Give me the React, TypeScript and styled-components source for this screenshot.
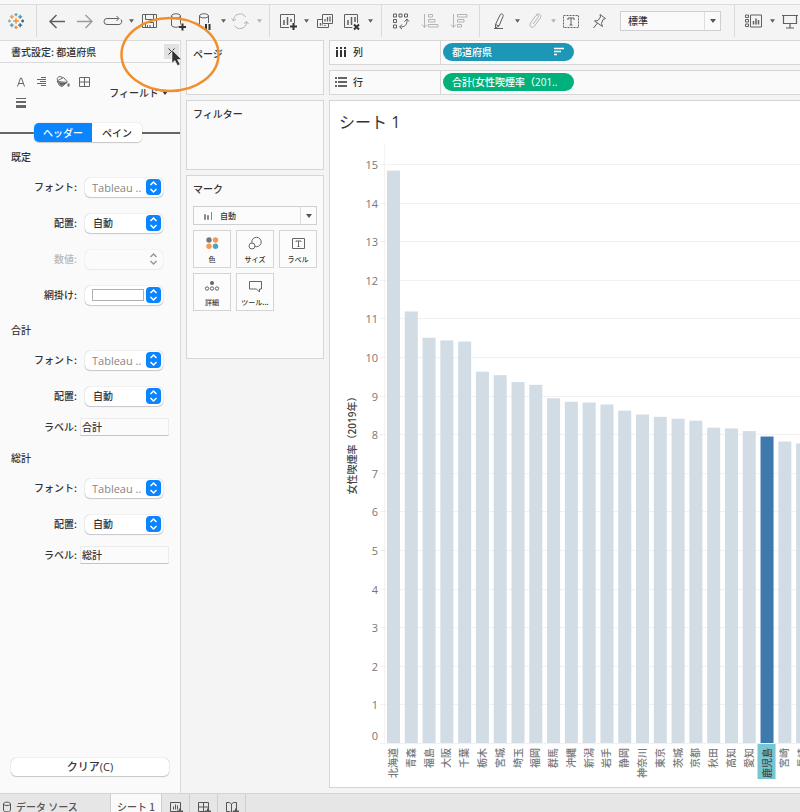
import React from "react";
import styled, { createGlobalStyle, css } from "styled-components";

const GlobalStyle = createGlobalStyle`
  *, *::before, *::after { box-sizing: border-box; }
  body {
    margin: 0;
    background: #f4f4f4;
    color: #333;
    font: 500 10px/16px "Liberation Sans", "Noto Sans CJK JP", sans-serif;
  }
  button, input, select { font: inherit; color: inherit; margin: 0; }
  h1, h2 { margin: 0; font-weight: 500; }
`;

const cjk = `"Noto Sans CJK JP", sans-serif`;
const latin = `"Open Sans", "Noto Sans CJK JP", sans-serif`;

/* ---------- frame ---------- */

const Window = styled.div`
  position: relative;
  display: flex;
  flex-direction: column;
  min-height: 100vh;
  overflow: hidden;
  font-family: ${cjk};
`;

const Toolbar = styled.header`
  display: flex;
  height: 40px;
  padding: 5px 0 3px;
  overflow: hidden;
  background: linear-gradient(#f8f8f8 4px, #dcdcdc 4px, #dcdcdc 5px, #f4f4f4 5px);
`;

const Group = styled.div<{ $left: number; $right: number; $last?: boolean; $gap?: number }>`
  display: flex;
  flex: none;
  align-items: center;
  gap: ${(p) => p.$gap ?? 0}px;
  padding: 0 ${(p) => p.$right}px 0 ${(p) => p.$left}px;
  border-right: ${(p) => (p.$last ? 0 : 1)}px solid #dadada;
`;

const ToolButton = styled.button<{ $dim?: boolean }>`
  display: grid;
  place-items: center;
  flex: none;
  width: 28px;
  height: 28px;
  padding: 0;
  border: 0;
  background: none;
  color: ${(p) => (p.$dim ? "#b4b4b4" : "#606060")};
`;

const CaretButton = styled(ToolButton)`
  width: 8px;
`;

const FitSelect = styled.label`
  display: grid;
  grid-template-columns: 1fr 16px;
  width: 101px;
  height: 20px;
  margin-left: 7px;
  border: 1px solid #cfcfcf;
  background: #fafafa;
`;

const PlainSelect = styled.select`
  min-width: 0;
  padding: 0 7px;
  border: 0;
  background: none;
  appearance: none;
`;

const SelectArrow = styled.span`
  display: grid;
  place-items: center;
  border-left: 1px solid #dedede;
  color: #555;
`;

const Workspace = styled.main`
  display: grid;
  flex: 1;
  grid-template-columns: 181px 138px minmax(0, 1fr);
  column-gap: 5px;
`;

/* ---------- format panel ---------- */

const FormatPanel = styled.aside`
  display: flex;
  flex-direction: column;
  padding-bottom: 17px;
  border: solid #dadada;
  border-width: 1px 1px 0 0;
  background: #fafafa;
`;

const PanelTitle = styled.div`
  display: flex;
  align-items: center;
  justify-content: space-between;
  height: 22px;
  padding: 0 1px 0 11px;
  border-bottom: 1px solid #dadada;
`;

const CloseButton = styled.button`
  display: grid;
  place-items: center;
  width: 15px;
  height: 15px;
  padding: 0;
  border: 0;
  background: #e2e2e2;
`;

const FormatTools = styled.div`
  display: flex;
  align-items: center;
  justify-content: space-between;
  padding: 11px 12px 12px 13px;
`;

const FormatIcons = styled.div`
  display: grid;
  grid-template-columns: repeat(4, 15px);
  gap: 5px 6px;
`;

const FormatButton = styled.button`
  display: grid;
  place-items: center;
  height: 16px;
  padding: 0;
  border: 0;
  background: none;
  color: #666;
`;

const FieldMenu = styled.button`
  display: flex;
  align-items: center;
  gap: 3px;
  padding: 0;
  border: 0;
  background: none;
`;

const TabLine = styled.div`
  display: grid;
  grid-template-columns: 34px auto 1fr;
  align-items: center;
  &::before, &::after {
    content: "";
    height: 2px;
    background: #666;
  }
`;

const Tabs = styled.div`
  display: flex;
  height: 19px;
  border-radius: 5px;
  overflow: hidden;
  background: #fff;
  box-shadow: 0 0 1px #999, 0 1px 1px #ccc;
`;

const Tab = styled.button<{ $active?: boolean }>`
  width: ${(p) => (p.$active ? 58 : 50)}px;
  padding: 0;
  border: 0;
  background: ${(p) => (p.$active ? "#0a84ff" : "#fff")};
  color: ${(p) => (p.$active ? "#fff" : "#333")};
`;

const Section = styled.section<{ $space: number }>`
  display: flex;
  flex-direction: column;
  gap: 16px;
  padding-top: ${(p) => p.$space}px;
`;

const SectionTitle = styled.h2`
  height: 20px;
  margin-bottom: -6px;
  padding-left: 11px;
  font-size: 10px;
  line-height: 20px;
`;

const Field = styled.label<{ $disabled?: boolean; $text?: boolean }>`
  display: grid;
  grid-template-columns: 77px 1fr;
  column-gap: ${(p) => (p.$text ? 3 : 8)}px;
  align-items: center;
  height: 20px;
  padding-right: ${(p) => (p.$text ? 11 : 17)}px;
  ${(p) => p.$text && css`margin-top: -5px;`}
  color: ${(p) => (p.$disabled ? "#b8b8b8" : "#333")};
`;

const FieldName = styled.span`
  text-align: right;
`;

const Popup = styled.span<{ $disabled?: boolean }>`
  display: grid;
  grid-template-columns: 1fr 15px;
  align-items: center;
  height: 19px;
  padding-right: 2px;
  border-radius: 5px;
  background: ${(p) => (p.$disabled ? "#fbfbfb" : "#fff")};
  box-shadow: 0 0 1px ${(p) => (p.$disabled ? "#ccc" : "#999")}, 0 1px 1px ${(p) => (p.$disabled ? "#eee" : "#ccc")};
`;

const PopupSelect = styled.select<{ $font?: boolean }>`
  min-width: 0;
  height: 19px;
  padding: 0 0 0 8px;
  border: 0;
  background: none;
  appearance: none;
  ${(p) => p.$font && css`
    padding: 2px 0 0 7px;
    font: 400 11px/16px "Open Sans", sans-serif;
    color: #858585;
  `}
`;

const Swatch = styled.button`
  height: 12px;
  margin: 0 2px 0 7px;
  padding: 0;
  border: 1px solid #b0b0b0;
  background: #fff;
`;

const TextInput = styled.input`
  width: 100%;
  height: 18px;
  padding: 0 1px 1px;
  border: 1px solid #ececec;
  border-bottom-color: #c4c4c4;
  background: #fbfbfb;
`;

const ClearButton = styled.button`
  height: 18px;
  margin: auto 11px 0;
  padding: 0;
  border: 0;
  border-radius: 5px;
  background: #fff;
  box-shadow: 0 0 1px #999, 0 1px 1px #ccc;
  font-family: ${latin};
  font-size: 11px;
  line-height: 18px;
`;

/* ---------- cards ---------- */

const Column = styled.div`
  display: flex;
  flex-direction: column;
  gap: 5px;
  min-width: 0;
  padding-bottom: 5px;
`;

const Card = styled.section<{ $height: number }>`
  min-height: ${(p) => p.$height}px;
  padding: 4px 6px;
  border: 1px solid #d6d6d6;
  background: #fafafa;
`;

const CardTitle = styled.h2`
  font-size: 10px;
  line-height: 18px;
`;

const MarkSelect = styled.label`
  display: grid;
  grid-template-columns: 19px 1fr 16px;
  align-items: stretch;
  height: 19px;
  margin: 8px 0 5px;
  border: 1px solid #d0d0d0;
  background: #fcfcfc;
  font-size: 8px;
`;

const MarkIcon = styled.span`
  display: grid;
  place-items: center end;
`;

const MarkGrid = styled.div`
  display: grid;
  grid-template-columns: repeat(3, 1fr);
  gap: 5px;
`;

const MarkButton = styled.button`
  display: flex;
  flex-direction: column;
  align-items: center;
  height: 38px;
  padding: 4px 0 0;
  border: 1px solid #d4d4d4;
  background: #fcfcfc;
  font-size: 7px;
  line-height: 16px;
  white-space: nowrap;
  svg { color: #666; }
`;

/* ---------- shelves and sheet ---------- */

const Shelf = styled.div`
  display: grid;
  grid-template-columns: 111px 1fr;
  height: 25px;
  border: 1px solid #d6d6d6;
  border-right: 0;
  background: #fafafa;
`;

const ShelfName = styled.div`
  display: flex;
  align-items: center;
  gap: 6px;
  padding: 0 0 2px 5px;
  border-right: 1px solid #d6d6d6;
`;

const ShelfDrop = styled.div`
  display: flex;
  align-items: center;
  padding: 0 0 1px 2px;
`;

const Pill = styled.button<{ $measure?: boolean }>`
  display: flex;
  align-items: center;
  justify-content: space-between;
  width: 131px;
  height: 18px;
  padding: 0 10px 0 9px;
  border: 0;
  border-radius: 9px;
  background: ${(p) => (p.$measure ? "#00b17b" : "#1c97b6")};
  color: #fff;
  font-family: ${latin};
  white-space: nowrap;
  overflow: hidden;
`;

const Sheet = styled.section`
  display: flex;
  flex: 1;
  flex-direction: column;
  border: 1px solid #d6d6d6;
  border-right: 0;
  background: #fff;
`;

const SheetTitle = styled.h1`
  padding: 9px 9px 8px;
  font: 400 16px/24px ${latin};
`;

const ChartSvg = styled.svg`
  display: block;
  width: 100%;
  height: 644px;
  font-family: ${latin};
`;

/* ---------- bottom tabs ---------- */

const SheetTabs = styled.footer`
  display: flex;
  align-items: flex-start;
  height: 19px;
  overflow: hidden;
  border-top: 1px solid #d4d4d4;
  background: #e6e6e6;
`;

const SheetTab = styled.button<{ $active?: boolean; $wide?: boolean }>`
  display: flex;
  align-items: center;
  justify-content: ${(p) => (p.$wide ? "flex-start" : "center")};
  gap: 4px;
  flex: none;
  width: ${(p) => (p.$wide ? 111 : p.$active ? 51 : 28)}px;
  height: 26px;
  padding: 0 ${(p) => (p.$wide ? 2 : 0)}px;
  border: 0;
  border-right: 1px solid #cfcfcf;
  background: ${(p) => (p.$active ? "#fafafa" : "transparent")};
  color: #555;
  white-space: nowrap;
`;

/* ---------- overlays ---------- */

const Callout = styled.svg`
  position: absolute;
  top: 16px;
  left: 119px;
  pointer-events: none;
`;

/* ---------- icons ---------- */

const Icon = ({ w = 20, h = 20, sw = 1, children }: { w?: number; h?: number; sw?: number; children: React.ReactNode }) => (
  <svg width={w} height={h} viewBox={`0 0 ${w} ${h}`} fill="none" stroke="currentColor" strokeWidth={sw} aria-hidden="true">
    {children}
  </svg>
);

const Caret = ({ size = 6 }: { size?: number }) => (
  <svg width={size} height={4} viewBox="0 0 6 4" aria-hidden="true"><path d="M0 0h6L3 4z" fill="currentColor" /></svg>
);

const plus = (x: number, y: number, r: number, c: string) => (
  <path key={`${x}-${y}`} d={`M${x - r} ${y}h${2 * r}M${x} ${y - r}v${2 * r}`} stroke={c} />
);

const Logo = () => (
  <Icon w={18} h={18} sw={1.3}>
    {plus(9, 9, 2.8, "#f08a2c")}
    {plus(4.8, 4.8, 2, "#e9963e")}
    {plus(13.2, 4.8, 2, "#4f8aa3")}
    {plus(4.8, 13.2, 2, "#4e9bb5")}
    {plus(13.2, 13.2, 2, "#2e6683")}
    {plus(9, 2.6, 1.6, "#5fa9b8")}
    {plus(9, 15.4, 1.6, "#ee8732")}
    {plus(2.4, 9, 1.4, "#77b3c4")}
    {plus(15.6, 9, 1.4, "#36617d")}
  </Icon>
);

const Back = () => <Icon sw={1.5}><path d="M18 10.500H3M9.500 4 3 10.500l6.500 6.500" /></Icon>;
const Forward = () => <Icon sw={1.3}><path d="M2 10.500h15M10.500 4l6.500 6.500-6.500 6.500" stroke="#999" /></Icon>;
const Loop = () => <Icon><path d="M15.500 7.500H4a3 3 0 0 0 0 6h12a3 3 0 0 0 2-5M13.500 5l2.500 2.500-2.500 2.500" /></Icon>;
const Save = () => <Icon><path d="M3.500 3.500h14v13h-14zM6.500 3.500v5h8v-5M6.500 16.500v-5h8v5M8.500 14v2.500M11 14v2.500" /></Icon>;
const cylinder = "M4.500 5c0-3 9-3 9 0v9c0 3-9 3-9 0zM4.500 5c0 2.500 9 2.500 9 0";
const DataAdd = () => <Icon><path d={cylinder} /><path d="M12 16h7M15.500 12.500v7" stroke="#f4f4f4" strokeWidth={4} /><path d="M12 16h7M15.500 12.500v7" stroke="#333" strokeWidth={2} /></Icon>;
const DataPause = () => <Icon><path d={cylinder} /><path d="M9 12h7v8H9z" fill="#f4f4f4" stroke="none" /><path d="M11 13v6M14.500 13v6" stroke="#333" strokeWidth={2} /></Icon>;
const Refresh = () => <Icon><path d="M2.500 9.500a6.500 6.500 0 0 1 12-3.500M15.500 11a6.500 6.500 0 0 1-12 3.500M0.500 7.500l2 2.500 2.500-2M17.500 13l-2-2.500-2.500 2" /></Icon>;
const SheetAdd = () => <Icon><path d="M2.500 3.500h14v13h-14z" /><path d="M6 14V9M9.500 14V6M13 11V8" strokeWidth={1.5} /><path d="M11 15.500h8M15 12v7" stroke="#f4f4f4" strokeWidth={4} /><path d="M12 15.500h7M15.500 12v7" stroke="#333" strokeWidth={2} /></Icon>;
const SheetCopy = () => <Icon><path d="M8.500 3.500h10v9h-10zM8 8.500H3.500v8h11V13" /><path d="M11 10.500V8M13.500 10.500V6M16 10.500V5.500M6.500 14.500v-2.500M8.500 14.500V13.500M11 15V14" strokeWidth={1.300} /></Icon>;
const SheetClear = () => <Icon><path d="M2.500 3.500h13v13h-13z" /><path d="M6 14V9M9.500 14V6M13 11V6" strokeWidth={1.500} /><path d="M11.500 13l5 5M16.500 13l-5 5" stroke="#f4f4f4" strokeWidth={4} /><path d="M12 13.500l5 5M17 13.500l-5 5" stroke="#333" strokeWidth={2} /></Icon>;
const Swap = () => <Icon><path d="M2.500 3h3v3h-3zM8 3h3v3H8zM13.500 3h3v3h-3zM2.500 8.500h3v3h-3zM2.500 14h3v3h-3zM9 16c5 0 7-2 7-7M13.500 10.500 16 8l2 2.500M11 13.500 8.500 16l2.500 2" /></Icon>;
const SortAsc = () => <Icon><path d="M4.500 3v13M2 13.500l2.500 3 2.500-3M8.500 3.500h4v2.500h-4zM8.500 8.500h6.500v2.500H8.500zM8.500 13.500h9.500V16H8.500z" /></Icon>;
const SortDesc = () => <Icon><path d="M4.500 3v13M2 13.500l2.500 3 2.500-3M8.500 3.500h9.500V6H8.500zM8.500 8.500h6.500v2.500H8.500zM8.500 13.500h4V16h-4z" /></Icon>;
const Pen = () => <Icon><path d="M6.500 13.500 11 4c1-2 4-1 3 1.500L10 15l-3.500 2zM6.500 13.500 10 15M5 17.500h9" /></Icon>;
const Clip = () => <Icon><path d="m8 13 5-6.500c1.500-2-1-3.500-2.500-1.500l-5 7c-2 3 1.500 6 4 3l5.500-7.500c2.500-3.500-1.500-6-4-3.500" /></Icon>;
const TextBox = () => <Icon><path d="M2.500 4.500h15v12h-15z" strokeDasharray="2 1" /><path d="M7 9V7h6v2M10 7v7M8.500 14h3" /></Icon>;
const Pin = () => <Icon><path d="m11 3.500 5.500 4-2.500 1-1.500 4 1 3-8-5.500 3.500-.5L11.500 6zM8.500 12 4.500 17" /></Icon>;
const ShowMe = () => <Icon><path d="M1.500 4h3v2.500h-3zM1.500 8.500h3V11h-3zM1.500 13h3v2.500h-3zM6.500 4h11v12h-11z" /><path d="M9.500 13.500V10M12 13.500V7.500M14.500 13.500V9" strokeWidth={1.500} /></Icon>;
const Present = () => <Icon><path d="M2 4.500h16M3.500 4.500v8h13v-8M10 12.500v4M6 17h8" strokeWidth={1.200} /></Icon>;

const Stepper = ({ off }: { off?: boolean }) => (
  <svg width={15} height={16} viewBox="0 0 15 16" fill="none" aria-hidden="true">
    {!off && <rect width={15} height={16} rx={4} fill="#0a84ff" />}
    <path d="m4.500 6 3-3 3 3M4.500 10l3 3 3-3" stroke={off ? "#999" : "#fff"} strokeWidth={1.500} />
  </svg>
);

/* ---------- chart ---------- */

const rates: [string, number][] = [
  ["北海道", 14.83], ["青森", 11.18], ["福島", 10.5], ["大阪", 10.43], ["千葉", 10.4], ["栃木", 9.62],
  ["宮城", 9.53], ["埼玉", 9.35], ["福岡", 9.28], ["群馬", 8.93], ["沖縄", 8.84], ["新潟", 8.82],
  ["岩手", 8.77], ["静岡", 8.61], ["神奈川", 8.51], ["東京", 8.45], ["茨城", 8.4], ["京都", 8.35],
  ["秋田", 8.17], ["高知", 8.15], ["愛知", 8.08], ["鹿児島", 7.94], ["宮崎", 7.81], ["長崎", 7.76],
];
const selected = "鹿児島";
const AXIS_X = 55;
const BASE = 601;
const UNIT = 579 / 15;
const BAND = 836 / 47;

const Chart = () => (
  <ChartSvg role="img" aria-label="女性喫煙率（2019年）">
    {Array.from({ length: 16 }, (_, n) => {
      const y = Math.round(BASE - n * UNIT);
      return (
        <g key={n}>
          <rect x={AXIS_X - 5} y={y} width="100%" height={1} fill="#f1f1f1" />
          <text x={48} y={n ? y + 5 : y - 3} textAnchor="end" fontSize={11} fill="#777">{n}</text>
        </g>
      );
    })}
    <rect x={AXIS_X - 1} y={2} width={1} height={600} fill="#f3f3f3" />
    <text transform="translate(26 301) rotate(-90)" textAnchor="middle" fontSize={10} fill="#444">
      女性喫煙率（<tspan fontWeight={600}>2019</tspan>年）
    </text>
    {rates.map(([name, value], i) => {
      const x = AXIS_X + i * BAND;
      const on = name === selected;
      return (
        <g key={name}>
          <rect x={x + 2} y={BASE - value * UNIT} width={13} height={value * UNIT} fill={on ? "#3e79ae" : "#d2dce5"} />
          {on && <rect x={x - 1} y={BASE + 1} width={18} height={35} fill="#76c6d4" />}
          <text transform={`translate(${x + 12} ${BASE + 5}) rotate(-90)`} textAnchor="end" fontSize={10} fill={on ? "#444" : "#777"}>{name}</text>
        </g>
      );
    })}
  </ChartSvg>
);

/* ---------- parts ---------- */

const Tool = ({ label, dim, children }: { label: string; dim?: boolean; children: React.ReactNode }) => (
  <ToolButton aria-label={label} $dim={dim}>{children}</ToolButton>
);
const Menu = ({ label, dim }: { label: string; dim?: boolean }) => (
  <CaretButton aria-label={label} $dim={dim}><Caret size={5} /></CaretButton>
);

const PopupField = ({ label, value, font, disabled }: { label: string; value: string; font?: boolean; disabled?: boolean }) => (
  <Field $disabled={disabled}>
    <FieldName>{label}</FieldName>
    <Popup $disabled={disabled}>
      <PopupSelect $font={font} disabled={disabled}><option>{value}</option></PopupSelect>
      <Stepper off={disabled} />
    </Popup>
  </Field>
);

const TotalSection = ({ title, space }: { title: string; space: number }) => (
  <Section $space={space}>
    <SectionTitle>{title}</SectionTitle>
    <PopupField label="フォント:" value="Tableau .." font />
    <PopupField label="配置:" value="自動" />
    <Field $text>
      <FieldName>ラベル:</FieldName>
      <TextInput defaultValue={title} />
    </Field>
  </Section>
);

export default function App() {
  return (
    <Window>
      <GlobalStyle />
      <Toolbar>
        <Group $left={2} $right={6}><Tool label="スタート"><Logo /></Tool></Group>
        <Group $left={6} $right={6}>
          <Tool label="元に戻す"><Back /></Tool>
          <Tool label="やり直し"><Forward /></Tool>
          <Tool label="再生"><Loop /></Tool>
          <Menu label="再生メニュー" />
          <Tool label="保存"><Save /></Tool>
          <Tool label="新しいデータ ソース"><DataAdd /></Tool>
          <Tool label="自動更新の一時停止"><DataPause /></Tool>
          <Menu label="自動更新メニュー" />
          <Tool label="更新" dim><Refresh /></Tool>
          <Menu label="更新メニュー" dim />
        </Group>
        <Group $left={4} $right={7}>
          <Tool label="新しいワークシート"><SheetAdd /></Tool>
          <Menu label="新規メニュー" />
          <Tool label="複製"><SheetCopy /></Tool>
          <Tool label="シートのクリア"><SheetClear /></Tool>
          <Menu label="クリア メニュー" />
        </Group>
        <Group $left={5} $right={6} $gap={1}>
          <Tool label="行と列の交換"><Swap /></Tool>
          <Tool label="昇順" dim><SortAsc /></Tool>
          <Tool label="降順" dim><SortDesc /></Tool>
        </Group>
        <Group $left={5} $right={13}>
          <Tool label="ハイライト"><Pen /></Tool>
          <Menu label="ハイライト メニュー" />
          <Tool label="グループ" dim><Clip /></Tool>
          <Menu label="グループ メニュー" dim />
          <Tool label="マーク ラベル"><TextBox /></Tool>
          <Tool label="軸の固定"><Pin /></Tool>
          <FitSelect>
            <PlainSelect aria-label="適合"><option>標準</option></PlainSelect>
            <SelectArrow><Caret /></SelectArrow>
          </FitSelect>
        </Group>
        <Group $left={5} $right={0} $last>
          <Tool label="表示形式"><ShowMe /></Tool>
          <Menu label="カード メニュー" />
          <Tool label="プレゼンテーション"><Present /></Tool>
        </Group>
      </Toolbar>

      <Workspace>
        <FormatPanel>
          <PanelTitle>
            <span>書式設定: 都道府県</span>
            <CloseButton aria-label="閉じる">
              <Icon w={9} h={9}><path d="m1.500 1.500 6 6M7.500 1.500l-6 6" /></Icon>
            </CloseButton>
          </PanelTitle>
          <FormatTools>
            <FormatIcons>
              <FormatButton aria-label="フォント"><Icon w={16} h={16}><path d="M4.500 12.500 7.500 4h1l3 8.500M5.500 9.500h5" /></Icon></FormatButton>
              <FormatButton aria-label="配置"><Icon w={16} h={16}><path d="M7 3.500h5M3 5.500h9M6 7.500h6M3 9.500h9M7 11.500h5" /></Icon></FormatButton>
              <FormatButton aria-label="網掛け">
                <Icon w={16} h={16}><path d="m2 7 6.500-3.500L12.500 8 7 12.500l-2.500-1zM2.500 6.500C1 3 6 1 7.500 4M2.500 7.500 12 8.500" /><path d="m3 8 8.500 1L7 12l-2-1z" fill="currentColor" stroke="none" /><path d="M13.500 9.500v3" strokeWidth={2} /></Icon>
              </FormatButton>
              <FormatButton aria-label="枠線"><Icon w={16} h={16}><path d="M3.500 3.500h10v9h-10zM8.500 3.500v9M3.500 8h10" /></Icon></FormatButton>
              <FormatButton aria-label="線"><Icon w={16} h={16}><path d="M3 3.500h10" /><path d="M3 7h10" strokeWidth={2} /><path d="M3 11.500h10" strokeWidth={3} /></Icon></FormatButton>
            </FormatIcons>
            <FieldMenu>フィールド <Caret /></FieldMenu>
          </FormatTools>
          <TabLine>
            <Tabs role="tablist">
              <Tab role="tab" aria-selected="true" $active>ヘッダー</Tab>
              <Tab role="tab" aria-selected="false">ペイン</Tab>
            </Tabs>
          </TabLine>
          <Section $space={5}>
            <SectionTitle>既定</SectionTitle>
            <PopupField label="フォント:" value="Tableau .." font />
            <PopupField label="配置:" value="自動" />
            <PopupField label="数値:" value="" disabled />
            <Field>
              <FieldName>網掛け:</FieldName>
              <Popup><Swatch aria-label="網掛けの色" /><Stepper /></Popup>
            </Field>
          </Section>
          <TotalSection title="合計" space={15} />
          <TotalSection title="総計" space={11} />
          <ClearButton>クリア(C)</ClearButton>
        </FormatPanel>

        <Column>
          <Card $height={55}><CardTitle>ページ</CardTitle></Card>
          <Card $height={70}><CardTitle>フィルター</CardTitle></Card>
          <Card $height={184}>
            <CardTitle>マーク</CardTitle>
            <MarkSelect>
              <MarkIcon><Icon w={10} h={10}><path d="M1.500 3.500h1v5h-1zM4.500 4.500h1v4h-1zM8.500 1v8" stroke="#888" /></Icon></MarkIcon>
              <PlainSelect aria-label="マーク タイプ"><option>自動</option></PlainSelect>
              <SelectArrow><Caret /></SelectArrow>
            </MarkSelect>
            <MarkGrid>
              <MarkButton>
                <Icon w={16} h={16}><g stroke="none"><circle cx={5} cy={5} r={2.700} fill="#777" /><circle cx={11.500} cy={5} r={2.700} fill="#f59a50" /><circle cx={5} cy={11.300} r={2.700} fill="#f59a50" /><circle cx={11.500} cy={11.300} r={2.700} fill="#4ea3bd" /></g></Icon>
                色
              </MarkButton>
              <MarkButton>
                <Icon w={16} h={16}><circle cx={9.500} cy={7} r={4.700} /><circle cx={5} cy={11} r={3} fill="#fcfcfc" /></Icon>
                サイズ
              </MarkButton>
              <MarkButton>
                <Icon w={16} h={16}><path d="M2.500 3.500h12v10h-12zM6 7V6h5v1M8.500 6v5.500M7.500 11.500h2" /></Icon>
                ラベル
              </MarkButton>
              <MarkButton>
                <Icon w={16} h={16}><circle cx={8} cy={5} r={2} fill="currentColor" stroke="none" /><circle cx={3} cy={10.500} r={1.700} /><circle cx={8} cy={10.500} r={1.700} /><circle cx={13} cy={10.500} r={1.700} /></Icon>
                詳細
              </MarkButton>
              <MarkButton>
                <Icon w={16} h={16}><path d="M2.500 3.500h12v7.500h-2v3l-3-3h-7z" /></Icon>
                ツール...
              </MarkButton>
            </MarkGrid>
          </Card>
        </Column>

        <Column>
          <Shelf>
            <ShelfName>
              <Icon w={12} h={12} sw={2}><path d="M2 1v2M6 1v2M10 1v2M2 4v7M6 4v7M10 4v7" /></Icon>
              列
            </ShelfName>
            <ShelfDrop>
              <Pill>
                都道府県
                <Icon w={10} h={10}><path d="M0 1.500h10M0 4.500h7M0 7.500h3" strokeWidth={1.500} /></Icon>
              </Pill>
            </ShelfDrop>
          </Shelf>
          <Shelf>
            <ShelfName>
              <Icon w={12} h={12} sw={1.500}><path d="M0 2h2M3 2h9M0 6h2M3 6h9M0 10h2M3 10h9" /></Icon>
              行
            </ShelfName>
            <ShelfDrop><Pill $measure>合計(女性喫煙率（201..</Pill></ShelfDrop>
          </Shelf>
          <Sheet>
            <SheetTitle>シート 1</SheetTitle>
            <Chart />
          </Sheet>
        </Column>
      </Workspace>

      <SheetTabs>
        <SheetTab $wide>
          <Icon w={10} h={12}><path d="M1.500 3c0-2.500 7-2.500 7 0v6c0 2.500-7 2.500-7 0zM1.500 3c0 2 7 2 7 0" /></Icon>
          データ ソース
        </SheetTab>
        <SheetTab $active>シート 1</SheetTab>
        <SheetTab aria-label="新しいワークシート"><Icon w={14} h={14}><path d="M1.500 2.500h10v9h-10zM4.500 9.500v-3M6.500 9.500v-5M8.500 9.500v-4" /><path d="M8 11.500h6M11 8.500v6" strokeWidth={2} /></Icon></SheetTab>
        <SheetTab aria-label="新しいダッシュボード"><Icon w={14} h={14}><path d="M1.500 2.500h10v9h-10zM6.500 2.500v9M1.500 7h10" /><path d="M8 11.500h6M11 8.500v6" strokeWidth={2} /></Icon></SheetTab>
        <SheetTab aria-label="新しいストーリー"><Icon w={14} h={14}><path d="M1.500 2.500h3l2 1.500 2-1.500h3v9h-3l-2 1-2-1h-3zM6.500 4v8.500" /><path d="M8 11.500h6M11 8.500v6" strokeWidth={2} /></Icon></SheetTab>
      </SheetTabs>

      <Callout width={102} height={78} viewBox="0 0 102 78" fill="none" aria-hidden="true">
        <ellipse cx={51} cy={38.500} rx={48.500} ry={36.500} stroke="#f28e2b" strokeWidth={2.500} />
        <path d="M53 34v13l3-2.500 2.500 5 2.500-1-2.500-5h4z" fill="#333" stroke="#fff" strokeWidth={0.500} />
      </Callout>
    </Window>
  );
}
